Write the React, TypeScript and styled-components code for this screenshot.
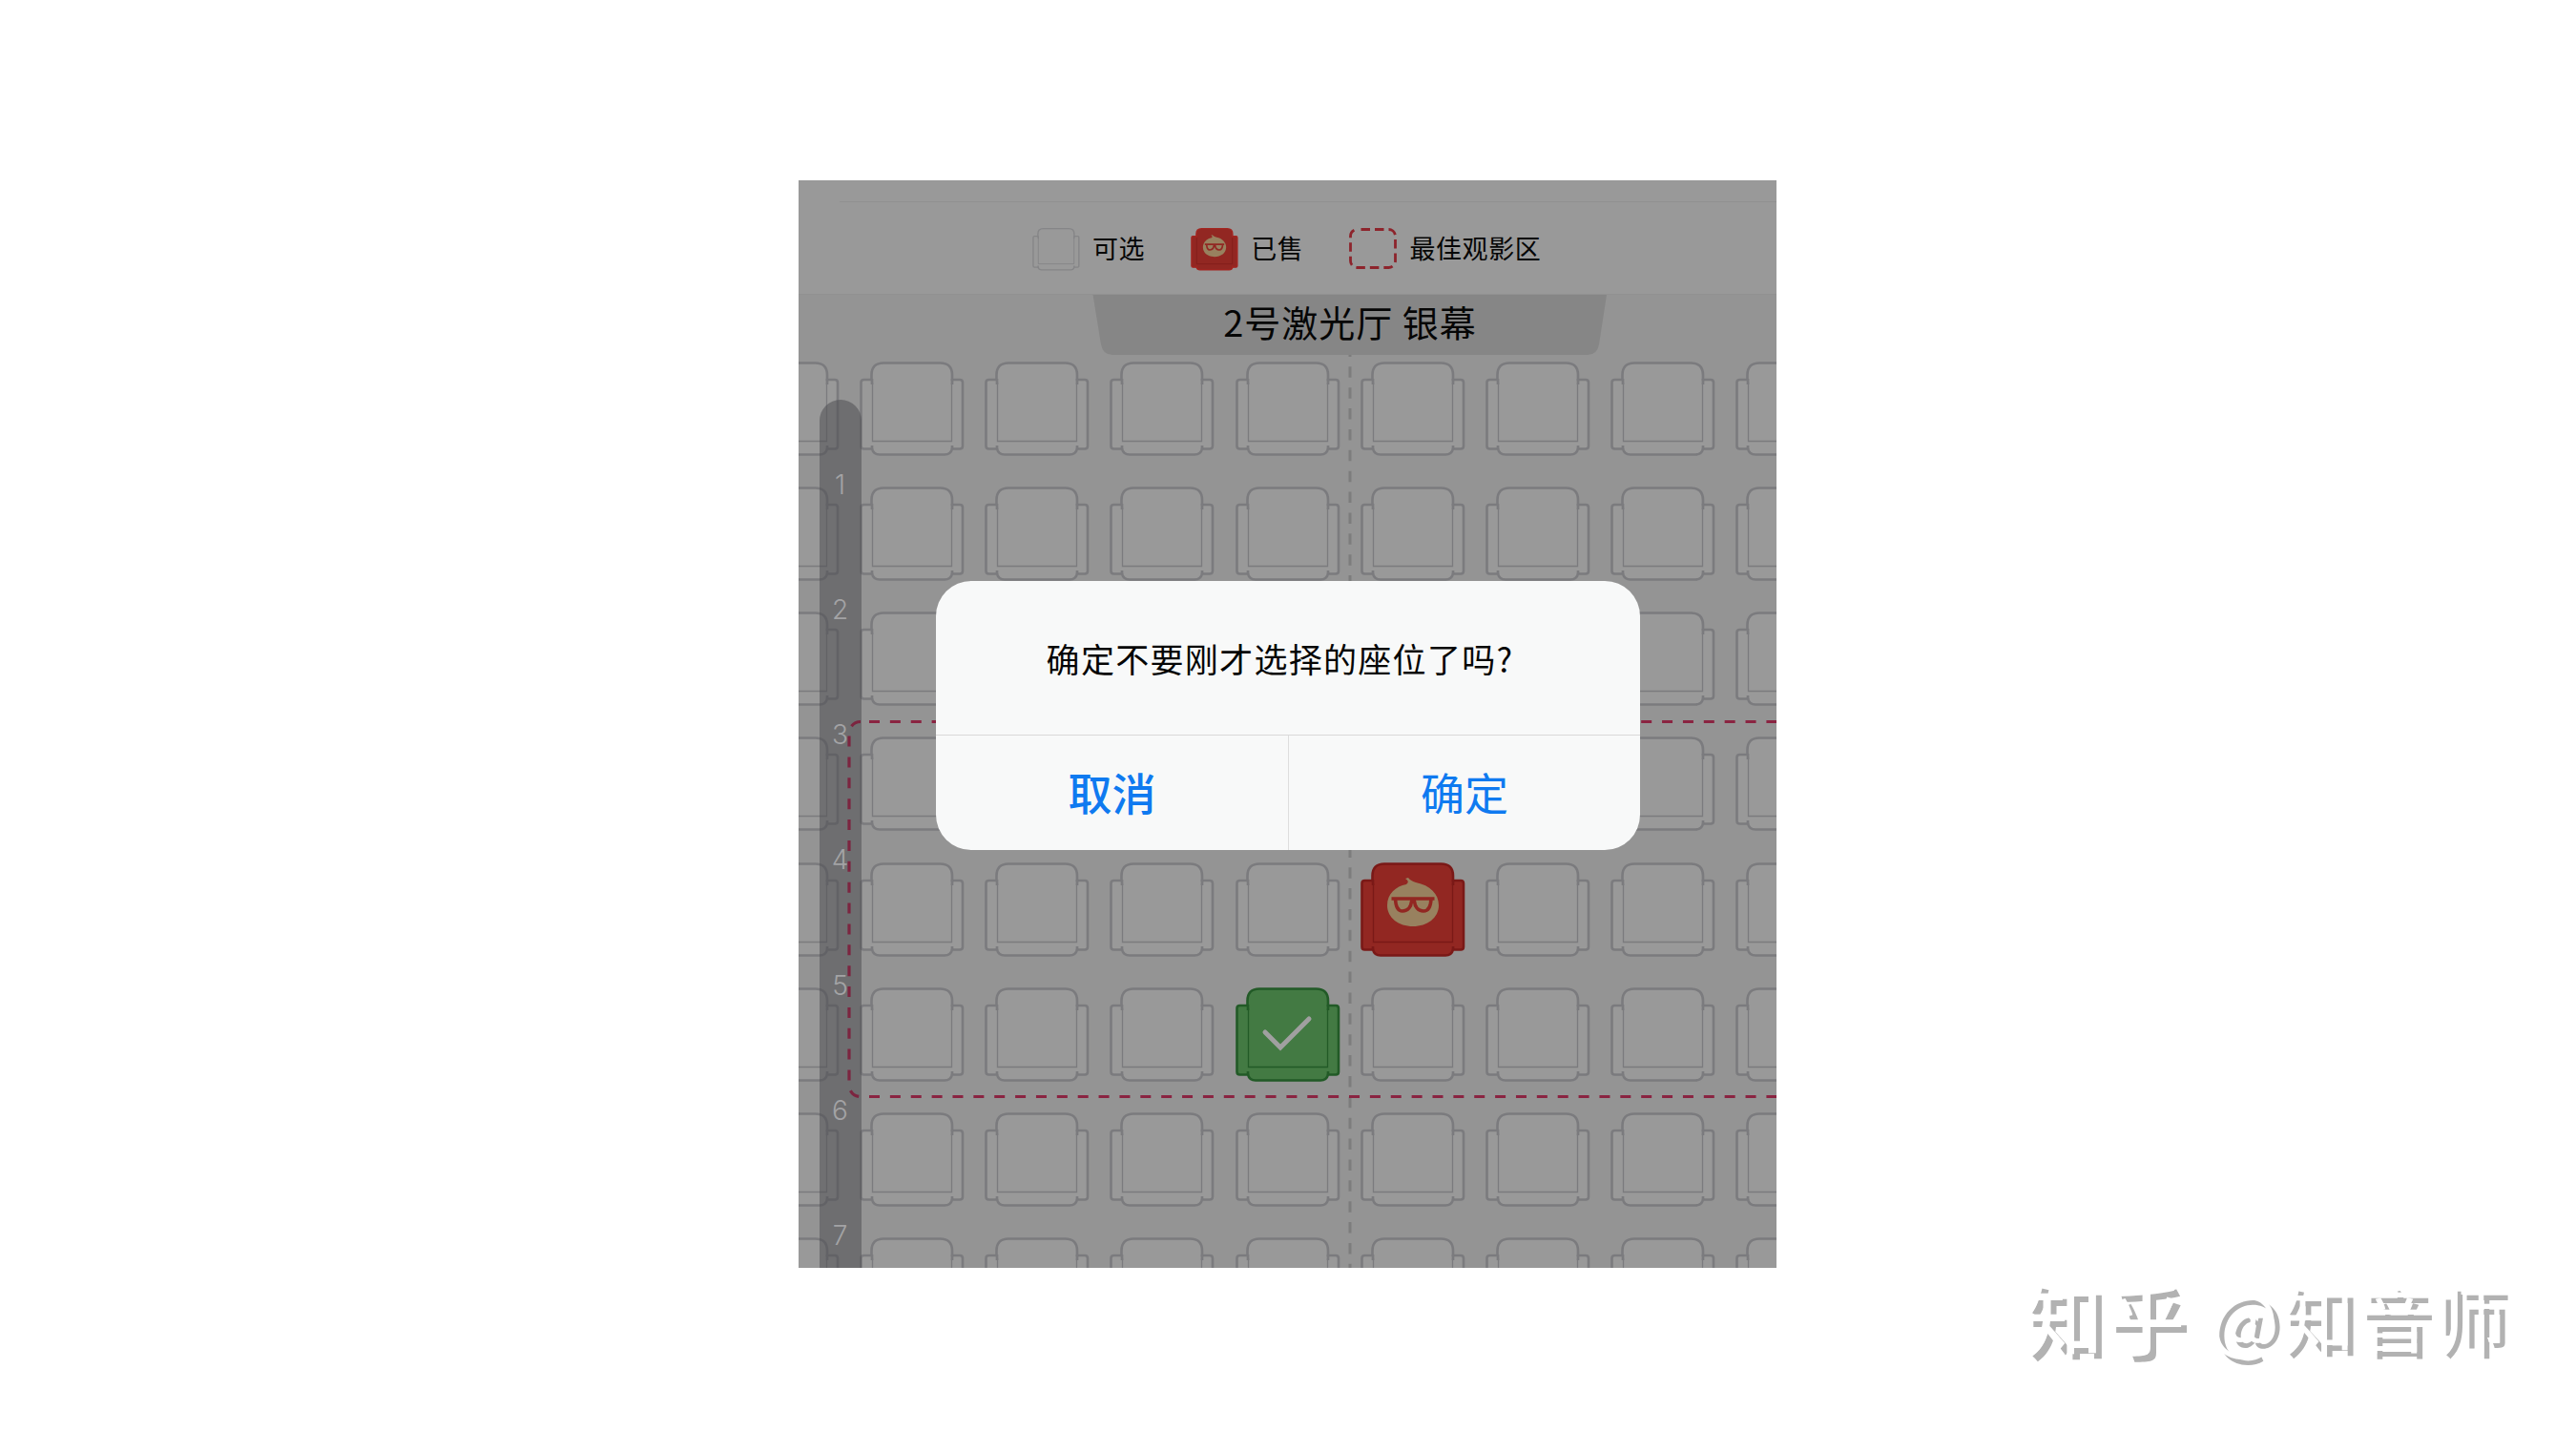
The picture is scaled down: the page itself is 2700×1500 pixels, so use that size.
import styled, { createGlobalStyle } from "styled-components";

const GlobalStyle = createGlobalStyle`
  * {
    box-sizing: border-box;
  }
  body {
    margin: 0;
    background: white;
    font-family: "Inter", "Noto Sans CJK SC", sans-serif;
  }
`;

const Page = styled.div`
  position: relative;
  width: 2700px;
  height: 1500px;
  padding: 189px 0 0 837px;
  overflow: hidden;
`;

const Phone = styled.main`
  position: relative;
  width: 1025px;
  height: 1140px;
  overflow: hidden;
  background: #949494;
`;

const Header = styled.header`
  height: 120px;
  padding-top: 22px;
  background: #999999;
  border-bottom: 1px solid #919191;
`;

const HeaderLine = styled.div`
  height: 1px;
  margin-left: 43px;
  background: #909090;
`;

const Legend = styled.ul`
  display: flex;
  margin: 27px 0 0 245px;
  padding: 0;
  list-style: none;
`;

const LegendItem = styled.li<{ $gap: number }>`
  display: flex;
  height: 44px;
  margin-right: ${(p) => p.$gap}px;
  svg {
    width: 50px;
    height: 45px;
    margin-right: 13px;
  }
`;

const LegendText = styled.span`
  color: #060606;
  font-family: "Noto Sans CJK SC", sans-serif;
  font-size: 27px;
  line-height: 42px;
  letter-spacing: 0.6px;
`;

const Hall = styled.section`
  position: relative;
  height: 1020px;
`;

const Screen = styled.div`
  position: relative;
  width: 540px;
  height: 63px;
  margin-left: 308px;
  text-align: center;
  svg {
    position: absolute;
    inset: 0;
  }
`;

const ScreenName = styled.h1`
  position: relative;
  margin: 0;
  color: #060606;
  font-family: "Noto Sans CJK SC", sans-serif;
  font-size: 38px;
  font-weight: 400;
  line-height: 56px;
  letter-spacing: 1px;
  white-space: nowrap;
`;

const Seats = styled.div`
  display: grid;
  grid-template-columns: repeat(9, 131.15px);
  grid-auto-rows: 131.15px;
  margin: 7px 0 0 -67px;
  svg {
    width: 110px;
    height: 100px;
  }
`;

const Lines = styled.svg`
  position: absolute;
  left: 0;
  top: 0;
`;

const RowBar = styled.div`
  position: absolute;
  left: 22px;
  top: 110px;
  width: 44px;
  height: 950px;
  padding-top: 24px;
  border-radius: 22px;
  background: rgba(78, 78, 82, 0.55);
`;

const RowNumber = styled.div`
  height: 131.15px;
  padding-right: 1px;
  color: #a3a3a5;
  font-family: "Inter", sans-serif;
  font-size: 28px;
  font-weight: 300;
  line-height: 131px;
  text-align: center;
`;

const Dialog = styled.div`
  position: absolute;
  left: 144px;
  top: 420px;
  width: 738px;
  height: 282px;
  border-radius: 37px;
  background: #f8f9f9;
  overflow: hidden;
`;

const Message = styled.p`
  height: 161px;
  margin: 0;
  padding-right: 17px;
  color: #050505;
  font-family: "Noto Sans CJK SC", sans-serif;
  font-size: 35px;
  line-height: 161px;
  letter-spacing: 1.3px;
  text-align: center;
`;

const Actions = styled.div`
  display: grid;
  grid-template-columns: 1fr 1fr;
  height: 121px;
  border-top: 1px solid #d9d9d9;
`;

const Action = styled.button<{ $bold?: boolean }>`
  padding: 0 0 4px;
  border: 0;
  border-left: ${(p) => (p.$bold ? "0" : "1px solid #dedede")};
  background: none;
  color: #0f7af0;
  font-family: "Noto Sans CJK SC", sans-serif;
  font-size: 46px;
  font-weight: ${(p) => (p.$bold ? 500 : 400)};
  line-height: 116px;
  cursor: pointer;
`;

const Watermark = styled.div`
  position: absolute;
  left: 2122px;
  top: 1319px;
  display: flex;
  gap: 22px;
  color: white;
  font-family: "Noto Sans CJK SC", sans-serif;
  font-size: 76px;
  line-height: 120px;
  letter-spacing: 3.5px;
  white-space: nowrap;
  text-shadow: 6px 6px 0 #b2b2b2;
`;

const Brand = styled.span`
  font-weight: 500;
  font-size: 82px;
  letter-spacing: 4px;
`;

type SeatKind = "free" | "sold" | "picked";

const seatColors = {
  free: { fill: "#999999", line: "#7b7b7e" },
  sold: { fill: "#922722", line: "#7a1917" },
  picked: { fill: "#437a43", line: "#225a27" },
};

const ROWS = 8;
const COLS = 9;

function seatKind(row: number, col: number): SeatKind {
  if (row === 4 && col === 5) return "sold";
  if (row === 5 && col === 4) return "picked";
  return "free";
}

function Seat({ kind, small }: { kind: SeatKind; small?: boolean }) {
  const { fill, line } = seatColors[kind];
  const stroke = small ? (kind === "sold" ? "#a32520" : "#858587") : line;
  const width = small ? 3 : 2.6;
  return (
    <svg viewBox="0 0 110 100" fill="none">
      <path
        d="M12.500 19H4.500Q1.500 19 1.500 22V88.500Q1.500 91.500 4.500 91.500H13Q14.500 97.500 21 97.500H89Q95.500 97.500 97 91.500H105Q108 91.500 108 88.500V22Q108 19 105 19H97V14Q97 1.500 84.500 1.500H25Q12.500 1.500 12.500 14Z"
        fill={fill}
        stroke={stroke}
        strokeWidth={width}
      />
      <path d="M13 18V24M97 18V24M13 88V92M97 88V92" stroke={stroke} strokeWidth={width} />
      <path d="M13.500 22V83.500H96.500V22" stroke={line} strokeWidth="1.300" />
      {kind === "sold" && (
        <g transform="translate(28 16)">
          <path
            d="M22 0Q24 3 30 5C45 8 54 17 54 29C54 42 42 51 27 51C12 51 0 42 0 29C0 17 9 9 20 7Q24 4 19 1Z"
            fill="#98815f"
          />
          <path
            d="M4.500 22H49.500M8.500 22Q9 35 16 35C22 35 25 30 25.500 25Q27 22.500 28.500 25C29 30 32 35 38 35Q45.500 35 46 22"
            stroke="#922722"
            strokeWidth="3.600"
          />
        </g>
      )}
      {kind === "picked" && (
        <path d="M31 47L47 63L77 33" stroke="#a0a0a0" strokeWidth="5" strokeLinecap="round" />
      )}
    </svg>
  );
}

export default function App() {
  const seats = Array.from({ length: ROWS * COLS }, (_, i) =>
    seatKind(Math.floor(i / COLS), i % COLS)
  );
  return (
    <Page>
      <GlobalStyle />
      <Phone>
        <Header>
          <HeaderLine />
          <Legend>
            <LegendItem $gap={48}>
              <Seat kind="free" small />
              <LegendText>可选</LegendText>
            </LegendItem>
            <LegendItem $gap={48}>
              <Seat kind="sold" small />
              <LegendText>已售</LegendText>
            </LegendItem>
            <LegendItem $gap={0}>
              <svg viewBox="0 0 50 45" fill="none">
                <rect
                  x="1.500"
                  y="1.500"
                  width="47"
                  height="40"
                  rx="7"
                  stroke="#8d242c"
                  strokeWidth="2.800"
                  strokeDasharray="9.500 5"
                  strokeDashoffset="-4"
                />
              </svg>
              <LegendText>最佳观影区</LegendText>
            </LegendItem>
          </Legend>
        </Header>
        <Hall>
          <Lines width="1025" height="1020" fill="none">
            <path d="M578 53.500V1020" stroke="#7d7d7d" strokeWidth="3" strokeDasharray="11.500 10.370" />
          </Lines>
          <Screen>
            <svg width="540" height="63">
              <path d="M0.500 0H539L531 52Q529 63 519 63H21Q11 63 9 52Z" fill="#868686" />
            </svg>
            <ScreenName>2号激光厅 银幕</ScreenName>
          </Screen>
          <Seats>
            {seats.map((kind, i) => (
              <Seat key={i} kind={kind} />
            ))}
          </Seats>
          <RowBar>
            {[1, 2, 3, 4, 5, 6, 7].map((n) => (
              <RowNumber key={n}>{n}</RowNumber>
            ))}
          </RowBar>
          <Lines width="1025" height="1020" fill="none">
            <g stroke="#8a2441" strokeWidth="3.200">
              <path d="M74 840.500H1025" strokeDasharray="11 10.870" />
              <path d="M74 447.500H1025" strokeDasharray="11 10.870" />
              <path
                d="M74 840.500H65A12 12 0 0 1 53 828.500V459.500A12 12 0 0 1 65 447.500"
                stroke="#7c2540"
                strokeDasharray="11 10.870"
                strokeDashoffset="11"
              />
            </g>
          </Lines>
        </Hall>
        <Dialog>
          <Message>确定不要刚才选择的座位了吗?</Message>
          <Actions>
            <Action $bold>取消</Action>
            <Action>确定</Action>
          </Actions>
        </Dialog>
      </Phone>
      <Watermark>
        <Brand>知乎</Brand>
        <span>@知音师</span>
      </Watermark>
    </Page>
  );
}
